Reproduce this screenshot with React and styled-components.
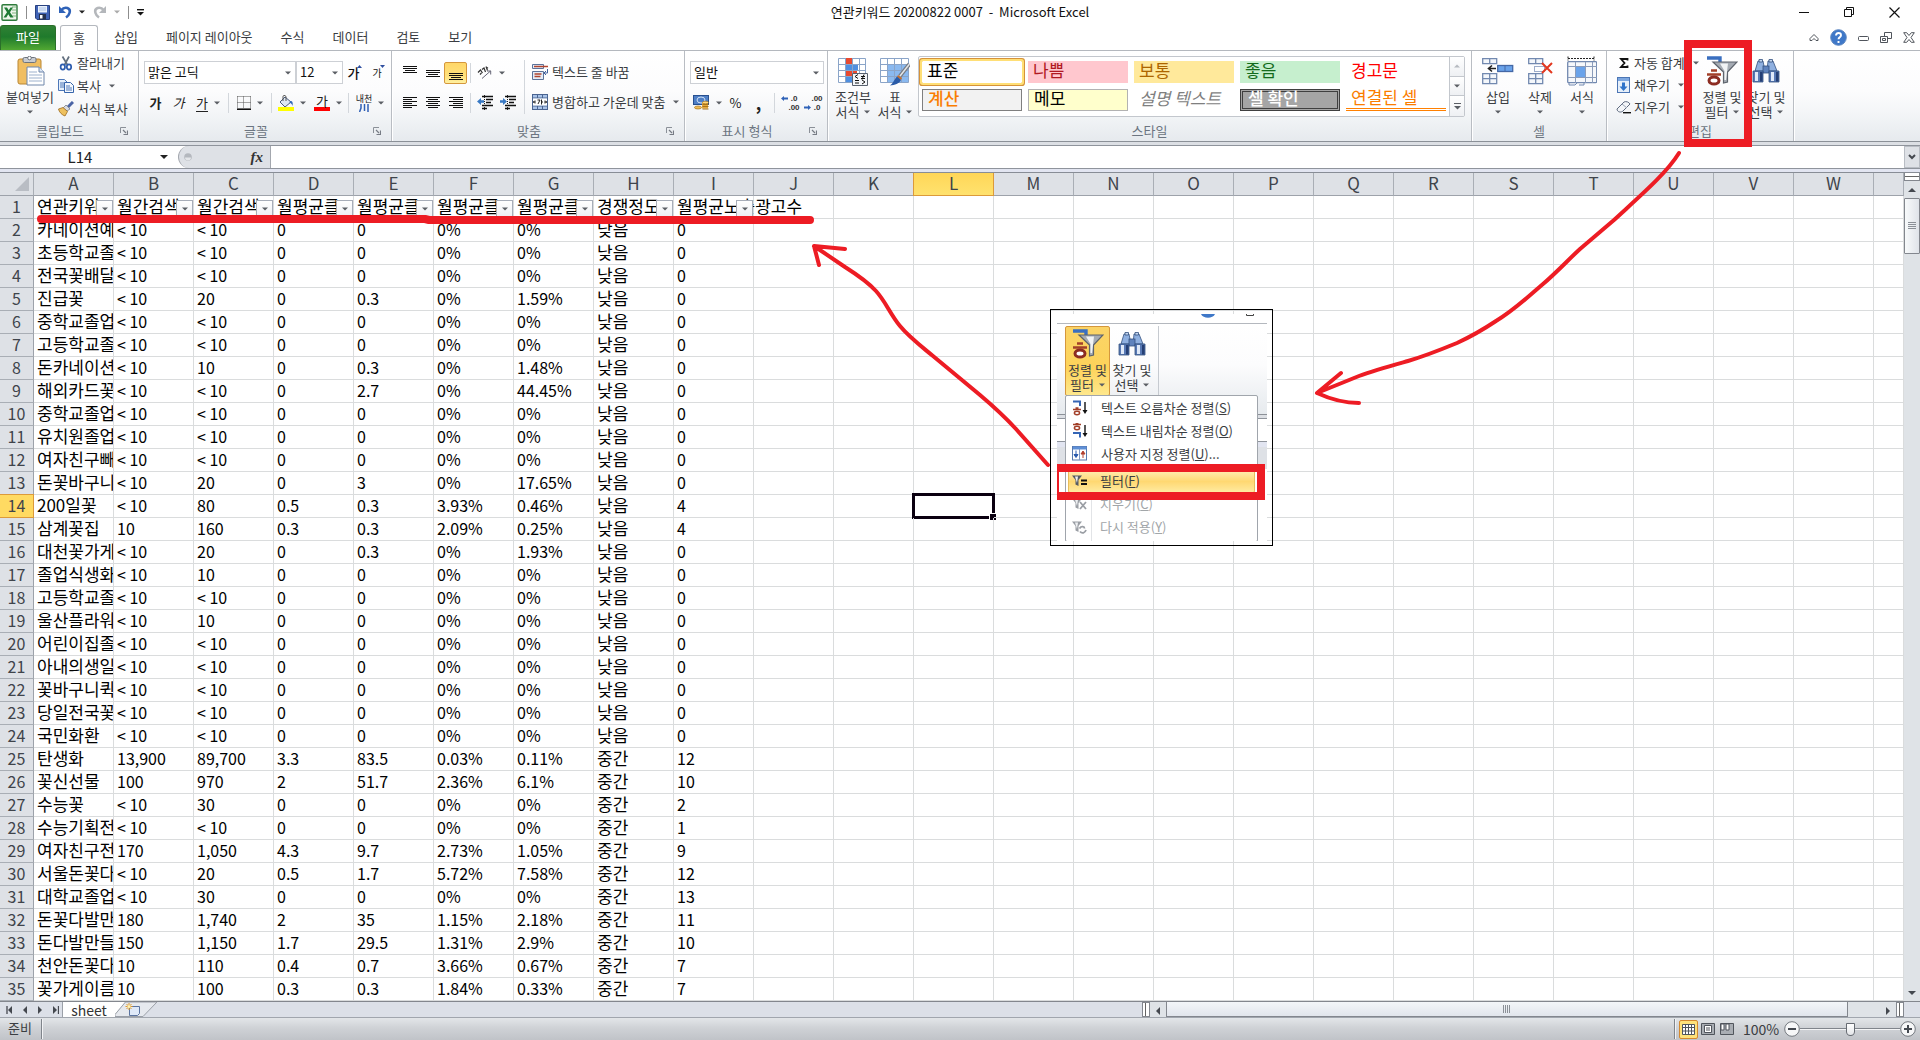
import React from "react";
import styled, { createGlobalStyle, css } from "styled-components";

const GlobalStyle = createGlobalStyle`
  * { box-sizing: border-box; }
  body { margin: 0; background: #fff; }
  button, input, select {
    font: inherit; color: inherit; margin: 0; padding: 0;
    border: 0; background: none; border-radius: 0; outline: none;
  }
  svg { display: block; flex: none; }
`;

/* ---------- frame ---------- */
const Window = styled.div`
  position: relative;
  display: flex;
  flex-direction: column;
  height: 100vh;
  overflow: hidden;
  background: #fff;
  color: #3a3d42;
  font-family: "Noto Sans CJK KR", "Noto Sans", sans-serif;
  font-size: 13px;
  line-height: 16px;
`;

const TitleBar = styled.header`
  display: grid;
  grid-template-columns: 1fr auto 1fr;
  align-items: center;
  height: 25px;
  padding-bottom: 1px;
`;
const QuickAccess = styled.div`
  display: flex;
  align-items: center;
  gap: 8px;
  padding-left: 1px;
`;
const QuickButton = styled.button`
  display: flex;
  align-items: center;
  gap: 7px;
  height: 20px;
`;
const ThinRule = styled.span`
  width: 1px;
  height: 13px;
  background: #8d8d8d;
`;
const Title = styled.h1`
  margin: 0;
  font-size: 13px;
  font-weight: 400;
  color: #111;
  white-space: pre;
`;
const Controls = styled.div`
  display: flex;
  justify-content: flex-end;
  align-items: center;
  gap: ${(p) => p.$gap}px;
  padding-right: ${(p) => p.$end}px;
`;
const PlainButton = styled.button`
  display: flex;
  align-items: center;
  justify-content: center;
`;

/* ---------- ribbon tabs ---------- */
const TabRow = styled.nav`
  display: flex;
  align-items: stretch;
  height: 26px;
  border-bottom: 1px solid #b4b8be;
`;
const FileTab = styled.button`
  width: 56px;
  margin-right: 4px;
  padding-bottom: 2px;
  color: #fff;
  border: 1px solid #2a6f2a;
  border-bottom: 0;
  border-radius: 3px 3px 0 0;
  background: linear-gradient(#2f8134, #1f7a2c 45%, #51a832);
`;
const RibbonTab = styled.button`
  padding: 0 14px 2px;
  ${(p) =>
    p.$active &&
    css`
      width: 38px;
      padding: 0 0 2px;
      margin: 0 2px -1px 0;
      background: #fff;
      border: 1px solid #b4b8be;
      border-bottom: 0;
      border-radius: 3px 3px 0 0;
    `}
`;

/* ---------- ribbon ---------- */
const Ribbon = styled.section`
  display: flex;
  height: 91px;
  background: linear-gradient(#fff, #fcfcfd 45%, #f3f5f7 70%, #e6eaee);
  border-bottom: 1px solid #8b9097;
`;
const Group = styled.div`
  display: flex;
  flex-direction: column;
  width: ${(p) => p.$w}px;
  border-right: 1px solid #b9bdc3;
  box-shadow: 1px 0 0 #fff;
`;
const GroupBody = styled.div`
  display: flex;
  height: 70px;
  padding-left: ${(p) => p.$pad}px;
`;
const GroupFoot = styled.div`
  display: flex;
  align-items: center;
  height: 19px;
  color: #6c7581;
`;
const GroupName = styled.span`
  flex: 1;
  text-align: center;
`;
const Launcher = styled.button`
  width: 18px;
  display: flex;
`;
const Stack = styled.div`
  display: flex;
  flex-direction: column;
  gap: ${(p) => p.$gap || 0}px;
  padding-top: ${(p) => p.$top}px;
  width: ${(p) => (p.$w ? p.$w + "px" : "auto")};
`;
const Row = styled.div`
  display: flex;
  align-items: center;
  height: 23px;
`;
const Tool = styled.button`
  display: flex;
  align-items: center;
  justify-content: center;
  gap: 6px;
  width: ${(p) => p.$w || 23}px;
  height: 22px;
  ${(p) =>
    p.$on &&
    css`
      border: 1px solid #d5973c;
      border-radius: 2px;
      background: linear-gradient(#ffd768, #ffe07a 60%, #fff0a0);
    `}
`;
const LineTool = styled.button`
  display: flex;
  align-items: center;
  gap: 3px;
  height: 22px;
  padding-left: 3px;
  white-space: nowrap;
  svg:last-child:not(:first-child) { margin-left: 5px; }
`;
const Divider = styled.span`
  align-self: ${(p) => (p.$tall ? "flex-start" : "center")};
  width: 1px;
  height: ${(p) => (p.$tall ? 54 : 20)}px;
  margin: ${(p) => (p.$tall ? 9 : 0)}px ${(p) => p.$m || 2}px 0;
  background: #d3d7dc;
`;
const BigTool = styled.button`
  display: flex;
  flex-direction: column;
  align-items: center;
  width: ${(p) => p.$w || 42}px;
  height: 70px;
  padding-top: ${(p) => (p.$snug ? 3 : 5)}px;
  line-height: 15px;
  white-space: nowrap;
  ${(p) =>
    p.$on &&
    css`
      padding-top: 2px;
      border: 1px solid #d5973c;
      border-radius: 2px;
      background: linear-gradient(#fbd467, #fdd35a 60%, #ffe88c);
    `}
`;
const BigLabel = styled.span`
  display: flex;
  align-items: center;
  justify-content: center;
  gap: 5px;
  height: 15px;
  &:first-of-type { margin-top: 3px; }
`;
const SelectBox = styled.label`
  position: relative;
  display: block;
  width: ${(p) => p.$w}px;
  height: 23px;
  svg { position: absolute; right: 5px; top: 10px; pointer-events: none; }
`;
const Select = styled.select`
  appearance: none;
  width: 100%;
  height: 23px;
  padding: 0 0 2px 3px;
  color: #111;
  background: #fff;
  border: 1px solid #cdd0d5;
`;
const GlyphText = styled.span`
  font-size: ${(p) => p.$size || 13}px;
  font-weight: ${(p) => (p.$bold ? 700 : 400)};
  font-style: ${(p) => (p.$slant ? "italic" : "normal")};
  color: #222;
  text-decoration: ${(p) => (p.$under ? "underline" : "none")};
  text-underline-offset: 3px;
`;
const SizeGlyph = styled.span`
  display: flex;
  align-items: flex-start;
  font-size: ${(p) => p.$size}px;
  font-weight: ${(p) => (p.$bold ? 500 : 400)};
  color: #111;
  svg { margin-left: -2px; }
`;
const RubyGlyph = styled.span`
  display: flex;
  flex-direction: column;
  align-items: center;
  font-size: 9px;
  line-height: 9px;
  color: #222;
  svg { margin-top: 1px; }
`;
const ColorGlyph = styled.span`
  display: flex;
  flex-direction: column;
  align-items: center;
  width: 16px;
  height: 16px;
  line-height: 12px;
  color: #222;
  border-bottom: 4px solid #f00;
`;

/* ---------- style gallery ---------- */
const Gallery = styled.div`
  display: flex;
  height: 61px;
  margin: 5px 0 0 2px;
  border: 1px solid #c3c7cd;
  border-radius: 2px;
  background: #fff;
`;
const Swatches = styled.div`
  display: grid;
  grid-template-columns: repeat(5, 100px);
  grid-auto-rows: 22px;
  gap: 6px;
  padding: 4px 3px;
`;
const swatchLooks = {
  normal: css`color: #000; border-radius: 1px; box-shadow: 0 0 0 2px #ffdf76, 0 0 0 3px #d5923a;`,
  bad: css`color: #b01822; background: #ffc7ce;`,
  neutral: css`color: #ad6500; background: #ffe99b;`,
  good: css`color: #146b1c; background: #c6efce;`,
  warn: css`color: #f00;`,
  calc: css`color: #fa7d00; font-weight: 500; background: #f2f2f2; border: 1px solid #7f7f7f;`,
  memo: css`color: #000; background: #ffffcc; border: 1px solid #b2b2b2;`,
  note: css`color: #7f7f7f; font-style: italic;`,
  check: css`color: #fff; font-weight: 500; background: #a5a5a5; border: 3px double #3f3f3f;`,
  linked: css`color: #fa7d00; border-bottom: 3px double #ff8001;`,
};
const Swatch = styled.button`
  display: flex;
  align-items: center;
  padding: 0 0 4px 5px;
  font-size: 17px;
  line-height: 18px;
  white-space: nowrap;
  ${(p) => swatchLooks[p.$look]}
`;
const GalleryScroll = styled.div`
  display: grid;
  grid-template-rows: repeat(3, 1fr);
  width: 15px;
`;
const GalleryButton = styled.button`
  display: flex;
  align-items: center;
  justify-content: center;
  border-left: 1px solid #c3c7cd;
  border-bottom: 1px solid #c3c7cd;
  background: linear-gradient(#fff, #eef0f3);
  &:last-child { border-bottom: 0; }
`;

/* ---------- formula bar ---------- */
const FormulaBar = styled.div`
  display: flex;
  height: 27px;
  padding-top: 3px;
  background: #dcdfe4;
`;
const FormulaInner = styled.div`
  display: flex;
  flex: 1;
  background: #fff;
  border-top: 1px solid #8f949c;
  border-bottom: 1px solid #8f949c;
`;
const NameBox = styled.div`
  display: flex;
  align-items: center;
  width: 178px;
  background: #fff;
`;
const NameInput = styled.input`
  width: 160px;
  text-align: center;
  font-size: 15px;
  line-height: 20px;
  color: #222;
`;
const FxArea = styled.div`
  display: flex;
  align-items: center;
  justify-content: space-between;
  width: 93px;
  padding: 0 7px 0 5px;
  background: #dee1e6;
  border: 1px solid #a3a7ae;
  border-width: 0 1px 0 1px;
  border-radius: 11px 0 0 11px;
`;
const FxName = styled.button`
  font-family: "Liberation Serif", serif;
  font-style: italic;
  font-weight: 700;
  font-size: 15px;
  color: #333;
`;
const FormulaInput = styled.input`
  flex: 1;
  background: #fff;
`;
const Expander = styled.button`
  display: flex;
  align-items: center;
  justify-content: center;
  width: 16px;
  background: #dee1e6;
  border: 1px solid #b9bdc4;
`;
const Strip = styled.div`
  height: 4px;
  background: #e2e5f1;
  border-bottom: 1px solid #888d96;
`;

/* ---------- sheet ---------- */
const SheetArea = styled.main`
  display: flex;
  flex: 1;
  min-height: 0;
`;
const SheetClip = styled.div`
  flex: 1;
  overflow: hidden;
`;
const Sheet = styled.table`
  width: 100%;
  table-layout: fixed;
  border-collapse: separate;
  border-spacing: 0;
`;
const Col = styled.col`width: ${(p) => (p.$w ? p.$w + "px" : "auto")};`;
const ColHead = styled.th`
  height: 23px;
  padding: 0 0 2px;
  font-size: 17px;
  line-height: 20px;
  font-weight: 400;
  color: #3f444b;
  background: #dee1e6;
  border-right: 1px solid #a9aeb5;
  border-bottom: 1px solid #9da2aa;
  ${(p) =>
    p.$on &&
    css`
      background: linear-gradient(#ffd658, #ffe26e);
      border-color: #dc9a3a;
      box-shadow: -1px 0 0 #dc9a3a;
    `}
`;
const Corner = styled(ColHead)`
  svg { margin: 2px 4px 0 auto; }
`;
const RowHead = styled.th`
  height: 23px;
  padding: 0 0 2px;
  font-size: 16px;
  line-height: 20px;
  font-weight: 400;
  color: #3f444b;
  background: #dee1e6;
  border-right: 1px solid #9da2aa;
  border-bottom: 1px solid #a9aeb5;
  ${(p) =>
    p.$on &&
    css`
      background: #ffda62;
      border-color: #dc9a3a;
      box-shadow: 0 -1px 0 #dc9a3a;
    `}
`;
const Cell = styled.td`
  position: relative;
  height: 23px;
  padding: 0 0 2px 3px;
  color: #000;
  font-size: ${(p) => (p.$hangul ? 17 : 16)}px;
  line-height: 20px;
  white-space: nowrap;
  overflow: ${(p) => (p.$clip ? "hidden" : "visible")};
  border-right: 1px solid #dadcdd;
  border-bottom: 1px solid #dadcdd;
`;
const FilterButton = styled.button`
  position: absolute;
  right: 0;
  bottom: 0;
  display: flex;
  align-items: center;
  justify-content: center;
  width: 17px;
  height: 18px;
  background: linear-gradient(#fff, #eceef2);
  border: 1px solid #a7adb8;
`;
const Cursor = styled.span`
  position: absolute;
  inset: -2px;
  border: 3px solid #0a0010;
  &::after {
    content: "";
    position: absolute;
    right: -4px;
    bottom: -4px;
    width: 6px;
    height: 6px;
    background: #0a0010;
    border: 1px solid #fff;
    border-width: 1px 0 0 1px;
  }
`;

/* ---------- scroll bars ---------- */
const VScroll = styled.div`
  display: flex;
  flex-direction: column;
  width: 16px;
  background: #dfe3e7;
`;
const SplitHandle = styled.div`
  height: 8px;
  border: 1px solid #83878e;
  border-top: 0;
  background: linear-gradient(#fff 3px, #666 3px, #666 4px, #fff 4px);
`;
const ArrowButton = styled.button`
  display: flex;
  align-items: center;
  justify-content: center;
  width: 16px;
  height: 17px;
`;
const VThumb = styled.div`
  display: flex;
  align-items: center;
  justify-content: center;
  height: 56px;
  border: 1px solid #83878e;
  border-radius: 1px;
  background: linear-gradient(90deg, #f8fafb, #dfe3e9);
`;
const Filler = styled.div`flex: 1;`;

const SheetBar = styled.div`
  display: flex;
  height: 17px;
  background: #dce0e8;
  border-top: 1px solid #83878e;
  border-bottom: 1px solid #a1a6ae;
`;
const SheetNav = styled.div`
  display: flex;
  align-items: center;
  width: 63px;
  padding-left: 2px;
  border-right: 1px solid #9ba0a8;
`;
const NavButton = styled.button`
  display: flex;
  justify-content: center;
  width: 15px;
`;
const SheetTab = styled.button`
  width: 52px;
  line-height: 14px;
  font-size: 14px;
  color: #333;
  background: #fff;
`;
const HSplit = styled.div`
  width: 8px;
  border: 1px solid #83878e;
  background: linear-gradient(90deg, #fff 2px, #666 2px, #666 3px, #fff 3px);
`;
const HTrack = styled.div`
  display: flex;
  width: 746px;
  background: #dfe3e7;
`;
const HThumb = styled.div`
  display: flex;
  align-items: center;
  justify-content: center;
  flex: 1;
  margin-right: 32px;
  border: 1px solid #83878e;
  border-top: 0;
  background: linear-gradient(#f3f6f9, #e1e5ec);
`;

/* ---------- status bar ---------- */
const StatusBar = styled.footer`
  display: flex;
  align-items: center;
  height: 22px;
  background: linear-gradient(#e3e6e9, #cfd2d6 45%, #c0c3c8);
`;
const StatusText = styled.span`
  padding: 0 9px 2px 8px;
`;
const StatusRule = styled.span`
  width: 1px;
  height: 20px;
  background: #7f848b;
  box-shadow: 1px 0 0 #f2f3f5;
`;
const ViewButton = styled.button`
  display: flex;
  align-items: center;
  justify-content: center;
  width: 19px;
  height: 19px;
  ${(p) =>
    p.$on &&
    css`
      border: 1px solid #d5892e;
      border-radius: 2px;
      background: #ffe27a;
    `}
`;
const Views = styled.div`
  display: flex;
  padding: 0 7px 0 4px;
`;
const ZoomValue = styled.button`
  width: 36px;
  font-size: 14px;
`;
const ZoomSlider = styled.input`
  appearance: none;
  width: 100px;
  height: 18px;
  background: linear-gradient(transparent 8px, #80858c 8px, #80858c 9px, #f4f5f6 9px, #f4f5f6 10px, transparent 10px);
  &::-webkit-slider-thumb {
    appearance: none;
    width: 9px;
    height: 13px;
    background: linear-gradient(#fff, #e4e6e9);
    border: 1px solid #666b72;
    border-radius: 1px 1px 5px 5px;
  }
`;
const ZoomEnds = styled.div`
  display: flex;
  align-items: center;
  padding: 0 4px 0 5px;
`;

/* ---------- pasted capture with the open menu ---------- */
const Capture = styled.aside`
  position: absolute;
  left: 1050px;
  top: 309px;
  width: 223px;
  height: 237px;
  padding: 4px 5px 4px 6px;
  border: 1px solid #000;
`;
const Shot = styled.div`
  position: relative;
  height: 227px;
  overflow: hidden;
  background: #fff;
`;
const ShotTop = styled.div`
  display: flex;
  justify-content: flex-end;
  gap: 31px;
  height: 10px;
  padding-right: 13px;
  border-bottom: 1px solid #b4b8be;
`;
const ShotRibbon = styled.div`
  display: flex;
  height: 91px;
  padding: 2px 0 0 8px;
  border-bottom: 1px solid #8b9097;
  background: linear-gradient(#fff, #fcfcfd 45%, #e6eaee);
`;
const ShotRule = styled.div`
  height: 74px;
  width: 1px;
  margin-left: 4px;
  background: #c6cad0;
`;
const ShotBars = styled.div`
  height: 32px;
  background: linear-gradient(#dcdfe4 3px, #8f949c 3px, #8f949c 4px, #fff 4px, #fff 26px, #8f949c 26px, #8f949c 27px, #e2e5f1 27px);
`;
const ShotHeads = styled.div`
  height: 22px;
  background: #dee1e6;
`;
const Menu = styled.ul`
  position: absolute;
  left: 8px;
  top: 81px;
  width: 193px;
  margin: 0;
  padding: 1px 2px 2px;
  list-style: none;
  background: linear-gradient(90deg, #fff 25px, #e2e4e7 25px, #e2e4e7 26px, #fff 26px);
  border: 1px solid #a0a5ac;
  border-radius: 2px;
`;
const MenuItem = styled.li`
  border-top: ${(p) => (p.$sep ? 4 : 0)}px solid transparent;
`;
const MenuButton = styled.button`
  display: flex;
  align-items: center;
  gap: 13px;
  width: 100%;
  height: 23px;
  padding: 0 0 2px 4px;
  white-space: nowrap;
  color: ${(p) => (p.disabled ? "#a2a6a9" : "#3a3d42")};
  ${(p) =>
    p.$on &&
    css`
      border: 1px solid #e8bd5a;
      border-radius: 2px;
      padding-left: 3px;
      background: linear-gradient(#ffecb0, #ffd872 50%, #ffeaa0);
    `}
`;
const Marks = styled.svg`
  position: absolute;
  left: 0;
  top: 0;
  pointer-events: none;
`;

/* ---------- icons ---------- */
const Down = ({ c = "#5a5e64" }) => (
  <svg width="6" height="4" viewBox="0 0 6 4"><path d="M0 .5h6L3 3.5z" fill={c} /></svg>
);
const ExcelIcon = () => (
  <svg width="17" height="17" viewBox="0 0 17 17">
    <rect x="1" y=".8" width="15" height="15.4" rx="1" fill="#eef6ec" stroke="#2d7a3a" strokeWidth="1.4" />
    <path d="M11 3h4M11 6h4M11 9h4M11 12h4" stroke="#7fb57f" />
    <path d="M3 3.5h3l1.700 2.800L9.500 3.500H12L9 8.300 12.500 13.500H9.300L7.300 10.300 5.300 13.500H2.500L6 8.300z" fill="#1f7a35" />
  </svg>
);
const SaveIcon = () => (
  <svg width="15" height="15" viewBox="0 0 15 15">
    <path d="M.5.5h14v14H2L.500 13z" fill="#3f62b5" stroke="#28417f" />
    <rect x="3" y="1" width="9" height="6.500" fill="#e8f0fb" />
    <path d="M4 3h7M4 5h7" stroke="#a9c0e5" />
    <rect x="4" y="9" width="7" height="5.500" fill="#26324f" /><rect x="5" y="10" width="2.500" height="3.500" fill="#fff" />
  </svg>
);
const Undo = ({ c = "#2f62b8", flip }) => (
  <svg width="14" height="14" viewBox="0 0 14 14">
    <g transform={flip ? "translate(14 0) scale(-1 1)" : undefined}>
      <path d="M3 5.500C7 .5 13 3 11.500 8c-.5 2-2 3.500-3.500 4.500" fill="none" stroke={c} strokeWidth="2.600" />
      <path d="M1 1v7h7z" fill={c} />
    </g>
  </svg>
);
const PasteIcon = () => (
  <svg width="30" height="30" viewBox="0 0 30 30">
    <rect x="3" y="3" width="23" height="25" rx="2" fill="#f0be62" stroke="#b98632" />
    <rect x="8" y="1.500" width="13" height="5" rx="1.500" fill="#c7cbd1" stroke="#6e747c" /><circle cx="14.500" cy="2" r="1.800" fill="#fff" stroke="#6e747c" />
    <path d="M12 11h12l5 5v13H12z" fill="#fff" stroke="#6e86aa" /><path d="M24 11v5h5" fill="#dbe6f5" stroke="#6e86aa" />
    <path d="M14 16h8M14 19h13M14 22h13M14 25h13" stroke="#9db1cd" />
  </svg>
);
const ScissorsIcon = () => (
  <svg width="16" height="16" viewBox="0 0 16 16">
    <path d="M4.500 1.500 9.500 10M11 1.500 6.500 10" stroke="#63707f" strokeWidth="1.700" />
    <ellipse cx="4.800" cy="12" rx="2.200" ry="2.600" fill="none" stroke="#2c5cae" strokeWidth="1.700" />
    <ellipse cx="11" cy="12" rx="2.200" ry="2.600" fill="none" stroke="#2c5cae" strokeWidth="1.700" />
  </svg>
);
const CopyIcon = () => (
  <svg width="16" height="16" viewBox="0 0 16 16">
    <path d="M.5 1.500h6l3 3v8h-9z" fill="#e7f0fb" stroke="#4d77b8" /><path d="M2 5h4M2 7h5M2 9h5" stroke="#4d77b8" />
    <path d="M6.500 4.500h6l3 3v7h-9z" fill="#f4f8fe" stroke="#3765ab" /><path d="M8 8h4M8 10h6M8 12h6" stroke="#4d77b8" />
  </svg>
);
const BrushIcon = () => (
  <svg width="16" height="16" viewBox="0 0 16 16">
    <path d="M15 1 10 6" stroke="#4a64a5" strokeWidth="3" />
    <path d="m8 4 4 4-3 2-4-3z" fill="#d7dae0" stroke="#6b7078" strokeWidth=".7" />
    <path d="M5 6.500 9.500 10.500 7 15C4 14 1 11 .5 8z" fill="#eec15f" stroke="#9c6b1e" strokeWidth=".8" />
  </svg>
);
const Lines = ({ rows }) => (
  <svg width="15" height="14" viewBox="0 0 15 14">
    {rows.map(([y, a, b]) => <path key={y} d={`M${a} ${y + 0.5}H${b}`} stroke="#111" />)}
  </svg>
);
const ALIGN = {
  top: [[0, 1, 15], [2, 1, 15], [4, 3, 13], [6, 1, 15]],
  middle: [[4, 1, 15], [6, 1, 15], [8, 3, 13], [10, 1, 15]],
  bottom: [[7, 1, 15], [9, 1, 15], [11, 3, 13], [13, 1, 15]],
  left: [[1, 1, 15], [3, 1, 10], [5, 1, 15], [7, 1, 10], [9, 1, 15], [11, 1, 10]],
  center: [[1, 1, 15], [3, 3, 13], [5, 1, 15], [7, 3, 13], [9, 1, 15], [11, 3, 13]],
  right: [[1, 1, 15], [3, 5, 15], [5, 1, 15], [7, 5, 15], [9, 1, 15], [11, 5, 15]],
};
const IndentIcon = ({ out }) => (
  <svg width="17" height="15" viewBox="0 0 17 15">
    <path d="M5 1.500h11M9 4.500h7M9 7.500h5M5 10.500h11M5 13.500h5" stroke="#111" strokeWidth="1.400" />
    <path d={out ? "M0 6.500 4 3v2.300h3v2.400H4V10z" : "M7 6.500 3 3v2.300H0v2.400h3V10z"} fill="#3879c4" />
    <path d="M7.500 0v15" stroke="#222" strokeDasharray="1 1" />
  </svg>
);
const OrientIcon = () => (
  <svg width="16" height="15" viewBox="0 0 16 15">
    <path d="M1 7.500 3.500 5l2 3M3 9.500l1.500-1.500M5 4.500 7 3l1.500 4M9 1.500l1.500 4M9.500 3.500 11 2.500" fill="none" stroke="#333" strokeWidth="1.200" />
    <path d="M5 13.500 13.500 6M10 6h3.700v3.500" fill="none" stroke="#667" />
  </svg>
);
const WrapIcon = () => (
  <svg width="17" height="16" viewBox="0 0 17 16">
    <path d="M.5.500h11v4H.500zM.500 7.500h11v8H.500z" fill="#e4ecf7" stroke="#5c7299" />
    <path d="M2 2.500h14" stroke="#b1452f" strokeWidth="1.500" /><path d="M2.500 10h7M2.500 12.500h6" stroke="#b1452f" strokeWidth="1.400" />
    <path d="M15.500 5v4h-3M14 7l-2 2 2 2" fill="none" stroke="#3f5f9d" />
  </svg>
);
const MergeIcon = () => (
  <svg width="17" height="16" viewBox="0 0 17 16">
    <rect x=".5" y=".5" width="15" height="15" fill="#a9c3e8" stroke="#4a6491" />
    <path d="M.5 4h15M.5 12h15M5.500.500V4M10.500.500V4M5.500 12v3.500M10.500 12v3.500" stroke="#4a6491" />
    <rect x="1" y="4.500" width="14" height="7" fill="#fff" />
    <path d="M1 8h3M12 8h3M3 6.500 1.500 8 3 9.500M13 6.500 14.500 8 13 9.500" stroke="#222" fill="none" />
    <path d="M5.500 6h2.500L6 10M9.500 5.500v5M9.500 8H11" stroke="#222" fill="none" />
  </svg>
);
const BorderIcon = () => (
  <svg width="14" height="14" viewBox="0 0 14 14">
    <path d="M.5.500h13M.500 6.500h13M.500.500v12M6.500.500v12M13.500.500v12" stroke="#555" strokeDasharray="1 1" /><path d="M0 13.200h14" stroke="#111" strokeWidth="1.600" />
  </svg>
);
const FillIcon = () => (
  <svg width="16" height="16" viewBox="0 0 16 16">
    <path d="m7 2 6 5-6 5-5-5z" fill="#dde7f4" stroke="#4a5c7c" /><path d="M5 6V1.500C5 0 8 0 8 2v4" fill="none" stroke="#555" />
    <path d="M12 6c3 0 3 2 2.500 5-1-3-2-3-3-3z" fill="#3169b7" /><rect y="12" width="16" height="4" fill="#ff0" />
  </svg>
);
const CoinIcon = () => (
  <svg width="17" height="17" viewBox="0 0 17 17">
    <rect x=".5" y="1.500" width="15" height="9" fill="#4f7fc6" stroke="#28508f" /><ellipse cx="8" cy="6" rx="4" ry="3" fill="none" stroke="#cfe0f5" />
    <path d="M9 8.500h6v6H9z" fill="#e6a93a" /><ellipse cx="12.500" cy="8.500" rx="3" ry="1.300" fill="#ffd97c" stroke="#a8731a" strokeWidth=".7" />
    <path d="M9.500 10.500h6M9.500 12.500h6M9.500 15h6" stroke="#a8731a" /><ellipse cx="5" cy="13.500" rx="3.500" ry="1.500" fill="#f0bc55" stroke="#a8731a" strokeWidth=".7" />
  </svg>
);
const DigitStack = styled.span`
  display: grid;
  grid-template-columns: auto auto;
  align-items: center;
  justify-content: end;
  font-family: "Liberation Sans", sans-serif;
  font-size: 8px;
  font-weight: 700;
  line-height: 9px;
  color: #333;
`;
const TinyArrow = ({ left }) => (
  <svg width="7" height="5" viewBox="0 0 7 5"><path d={left ? "M0 2.500 3 0v1.600h4v1.800H3V5z" : "M7 2.500 4 0v1.600H0v1.800h4V5z"} fill="#2f62b8" /></svg>
);
const CondIcon = () => (
  <svg width="30" height="30" viewBox="0 0 30 30">
    <path d="M.5 2.500h27v24H.500z" fill="#fff" stroke="#8aa4c8" />
    <path d="M8 2h6v6H8zM8 14h11v6H8z" fill="#e8492f" /><path d="M8 8h12v6H8zM8 20h6v6H8z" fill="#4f8fe0" />
    <path d="M7.500 2v24M14.500 2v24M21.500 2v24M.500 8.500h27M.500 14.500h27M.500 20.500h27" stroke="#8aa4c8" />
    <path d="M14.500 17.500h15v12h-15z" fill="#f5f7fa" stroke="#59616e" />
    <path d="m20 18.500-3 2 3 2M17 24.500h4M17 27h4M23 20.500h4M23 22.500h4M26 18.500l-2 5M24 24l3 2-3 2" fill="none" stroke="#111" />
  </svg>
);
const TableIcon = () => (
  <svg width="30" height="30" viewBox="0 0 30 30">
    <path d="M.5 2.500h28v24H.500z" fill="#fff" stroke="#8aa4c8" /><path d="M8 8h20v18H8z" fill="#8ab9f0" />
    <path d="M7.500 2v24M14.500 2v24M21.500 2v24M.500 8.500h28M.500 14.500h28M.500 20.500h28" stroke="#8aa4c8" />
    <path d="M29.500 8 20 20" stroke="#777c84" strokeWidth="4" /><path d="M29.500 8 20 20" stroke="#e5e7ea" strokeWidth="1.500" />
    <path d="m18 19 4 3-1 2-4-3z" fill="#c86f2c" /><path d="M17 20.500 21 24c-2 4-6 5-11 5.500 3-2 4-6 7-9z" fill="#2a5ba8" />
  </svg>
);
const InsertIcon = () => (
  <svg width="32" height="30" viewBox="0 0 32 30">
    <path d="M.7 2.700h14v5H.700zM.700 17.700h14v10H.700zM7.700 2.700v5M7.700 17.700v10M.700 22.700h14" fill="#f4f7fb" stroke="#7289b0" strokeWidth="1.300" />
    <rect x="15.700" y="9.500" width="15" height="6" fill="#6aa3ea" stroke="#4468a6" strokeWidth="1.300" />
    <path d="M23 9v7" stroke="#4468a6" /><path d="M7 12.500h7M10 9.500l-3.500 3 3.500 3" fill="none" stroke="#222" strokeWidth="1.600" />
  </svg>
);
const DeleteIcon = () => (
  <svg width="30" height="30" viewBox="0 0 30 30">
    <path d="M3.700 2.700h14v5h-14zM3.700 17.700h14v10h-14zM10.700 2.700v5M10.700 17.700v10M3.700 22.700h14" fill="#f4f7fb" stroke="#7289b0" strokeWidth="1.300" />
    <path d="M9.500 10.500h10v5h-10z" fill="none" stroke="#3b5b95" strokeDasharray="1 1" />
    <path d="m17 7 10 10M27 7 17 17" stroke="#e2371f" strokeWidth="2" />
  </svg>
);
const FormatIcon = () => (
  <svg width="30" height="30" viewBox="0 0 30 30">
    <path d="M1 .500v4M27 .500v4M1 2.500h26" stroke="#222" strokeDasharray="2 1" />
    <rect x=".7" y="5.700" width="29" height="21" rx="1" fill="#f6f8fb" stroke="#7289b0" strokeWidth="1.300" />
    <path d="M9 10h9v11H9z" fill="#6aa3ea" /><path d="M8.500 6v21M18.500 6v21M25.500 6v21M1 10.500h29M1 21.500h29" stroke="#8b9cba" />
    <path d="M2 27v2h6l2-2M12 29h5v-2" fill="none" stroke="#7289b0" />
  </svg>
);
const SigmaIcon = () => (
  <svg width="15" height="14" viewBox="0 0 15 14"><path d="M11.500 4.500V3H5l3.500 4L5 11h6.500V9.500" fill="none" stroke="#111" strokeWidth="1.800" /></svg>
);
const FillDownIcon = () => (
  <svg width="15" height="16" viewBox="0 0 15 16">
    <rect x="1.500" y=".5" width="12" height="15" fill="#e6effa" stroke="#4c76b5" /><rect x="2" y="1" width="11" height="3" fill="#7da7e0" />
    <path d="M7.500 14 3.500 9.500H6V5.500h3v4h2.500z" fill="#2f73c9" />
  </svg>
);
const EraserIcon = () => (
  <svg width="15" height="14" viewBox="0 0 15 14">
    <path d="m1 9 7-7c2-1 5 0 6 2L7 11c-2 2-6 1-6-2z" fill="#f3f5f8" stroke="#5f6b80" /><path d="m6 4 5 4" stroke="#98a2b4" /><path d="M7 12.700h8" stroke="#111" strokeWidth="1.400" />
  </svg>
);
const SortFilterIcon = () => (
  <svg width="32" height="30" viewBox="0 0 32 30">
    <path d="M1 2h13v9" fill="none" stroke="#3a6fc0" strokeWidth="3.400" />
    <path d="M7 6h24l-9.500 10v10l-4 1V16z" fill="#a5abb3" stroke="#5d636c" strokeWidth="1.200" />
    <path d="M14 7.500h8L20 24h-1.500V15z" fill="#f1f3f5" />
    <path d="M1 18.500h14M5 14.500h6" stroke="#a3402a" strokeWidth="2.600" /><ellipse cx="8" cy="24.500" rx="5" ry="3.500" fill="#fff" stroke="#8c2c22" strokeWidth="3" />
  </svg>
);
const FindIcon = () => (
  <svg width="30" height="30" viewBox="0 0 30 30">
    <g stroke="#34507f" strokeWidth=".8">
      <path d="M7 5h5l2 10H4zM17 5h5l4 10H16z" fill="#8fb0e0" /><path d="M8 3.500h3.500V6H8zM18 3.500h3.500V6H18z" fill="#c3d5ef" />
      <rect x="12" y="10" width="6" height="7" fill="#5f83bd" />
      <path d="M2 15h10v11H2zM18 15h10v11H18z" fill="#5879b5" />
    </g>
    <path d="M4 16h3v9H4zM20 16h3v9h-3z" fill="#dfe9f8" /><path d="M9 16h2.500v9.500H9zM25 16h2.500v9.500H25z" fill="#253f74" />
  </svg>
);
const LauncherIcon = () => (
  <svg width="8" height="8" viewBox="0 0 8 8"><path d="M.5 6V.500H6" fill="none" stroke="#8b9098" /><path d="M3 3l3 3M7.500 3.500v4h-4" fill="none" stroke="#777c85" strokeWidth="1.200" /></svg>
);
const HelpIcon = () => (
  <svg width="17" height="17" viewBox="0 0 17 17">
    <circle cx="8.500" cy="8.500" r="7.800" fill="#3f78c8" stroke="#5c86c0" /><path d="M6 6.500c0-3.500 5-3.200 5-.3 0 2-2.500 2-2.500 4M8.500 12v2" fill="none" stroke="#fff" strokeWidth="1.900" />
  </svg>
);
const FunnelSmall = ({ c = "#555b64", tail }) => (
  <svg width="15" height="15" viewBox="0 0 15 15"><path d="M0 2.500h10L6.500 7v6l-3-1.500V7z" fill={c} /><path d="M3 3.500h3L5 10z" fill="#eef0f2" />{tail}</svg>
);
const SortSmall = ({ desc }) => (
  <svg width="16" height="16" viewBox="0 0 16 16">
    <g transform={desc ? "translate(0 8.500)" : undefined}><path d="M1 1.500h7v4.500" fill="none" stroke="#3565b5" strokeWidth="2" /></g>
    <g transform={desc ? "translate(0 -8)" : undefined}><path d="M1 9.500h8M3.500 8h3" stroke="#a3402a" strokeWidth="1.500" /><ellipse cx="5" cy="13" rx="2.600" ry="1.700" fill="none" stroke="#a3402a" strokeWidth="1.500" /></g>
    <path d="M13 2v9" stroke="#111" strokeWidth="1.400" /><path d="M10.500 10h5L13 14z" fill="#111" />
  </svg>
);
const CustomSort = () => (
  <svg width="16" height="15" viewBox="0 0 16 15">
    <rect x=".5" y=".5" width="14" height="13.500" fill="#fff" stroke="#5679ae" /><path d="M1 2h13.500" stroke="#5e8fd6" strokeWidth="3" /><path d="M7.500 3v11" stroke="#7f99c4" />
    <path d="M4 4.500v6M2 8.500l2 3 2-3z" stroke="#2c5cae" fill="#2c5cae" /><path d="M11 12V6M9 8l2-3 2 3z" stroke="#b2402e" fill="#b2402e" />
  </svg>
);
const ZoomKnob = ({ plus }) => (
  <svg width="16" height="16" viewBox="0 0 16 16"><circle cx="8" cy="8" r="7.300" fill="#f6f7f8" stroke="#74797f" /><path d={plus ? "M4 8h8M8 4v8" : "M4 8h8"} stroke="#444950" strokeWidth="2" /></svg>
);
const Triangle = ({ dir, bar, c = "#44484f" }) => {
  const d = { left: "M6 0v8L2 4z", right: "M2 0v8l4-4z", up: "M0 6h8L4 2z", down: "M0 2h8L4 6z" }[dir];
  return (
    <svg width="8" height="8" viewBox="0 0 8 8">
      <path d={d} fill={c} />
      {bar && <path d={dir === "left" ? "M1 0v8" : "M7.500 0v8"} stroke={c} strokeWidth="1.300" />}
    </svg>
  );
};

/* ---------- data ---------- */
const TABS = ["삽입", "페이지 레이아웃", "수식", "데이터", "검토", "보기"];
const COLUMNS = "ABCDEFGHIJKLMNOPQRSTUVW".split("");
const HEADINGS = ["연관키워", "월간검색", "월간검색", "월평균클", "월평균클", "월평균클", "월평균클", "경쟁정도", "월평균노출광고수"];
const L = "< 10";
const row = (name, b = L, c = L, d = "0", e = "0", f = "0%", g = "0%", h = "낮음", i = "0") => [name, b, c, d, e, f, g, h, i];
const RECORDS = [
  row("카네이션예"),
  row("초등학교졸"),
  row("전국꽃배달"),
  row("진급꽃", L, "20", "0", "0.3", "0%", "1.59%"),
  row("중학교졸업"),
  row("고등학교졸"),
  row("돈카네이션", L, "10", "0", "0.3", "0%", "1.48%"),
  row("해외카드꽃", L, L, "0", "2.7", "0%", "44.45%"),
  row("중학교졸업"),
  row("유치원졸업"),
  row("여자친구빼"),
  row("돈꽃바구니", L, "20", "0", "3", "0%", "17.65%"),
  row("200일꽃", L, "80", "0.5", "0.3", "3.93%", "0.46%", "낮음", "4"),
  row("삼계꽃집", "10", "160", "0.3", "0.3", "2.09%", "0.25%", "낮음", "4"),
  row("대천꽃가게", L, "20", "0", "0.3", "0%", "1.93%"),
  row("졸업식생화", L, "10"),
  row("고등학교졸"),
  row("울산플라워", L, "10"),
  row("어린이집졸"),
  row("아내의생일"),
  row("꽃바구니퀵"),
  row("당일전국꽃"),
  row("국민화환"),
  row("탄생화", "13,900", "89,700", "3.3", "83.5", "0.03%", "0.11%", "중간", "12"),
  row("꽃신선물", "100", "970", "2", "51.7", "2.36%", "6.1%", "중간", "10"),
  row("수능꽃", L, "30", "0", "0", "0%", "0%", "중간", "2"),
  row("수능기획전", L, L, "0", "0", "0%", "0%", "중간", "1"),
  row("여자친구전", "170", "1,050", "4.3", "9.7", "2.73%", "1.05%", "중간", "9"),
  row("서울돈꽃다", L, "20", "0.5", "1.7", "5.72%", "7.58%", "중간", "12"),
  row("대학교졸업", L, "30", "0", "0", "0%", "0%", "중간", "13"),
  row("돈꽃다발만", "180", "1,740", "2", "35", "1.15%", "2.18%", "중간", "11"),
  row("돈다발만들", "150", "1,150", "1.7", "29.5", "1.31%", "2.9%", "중간", "10"),
  row("천안돈꽃다", "10", "110", "0.4", "0.7", "3.66%", "0.67%", "중간", "7"),
  row("꽃가게이름", "10", "100", "0.3", "0.3", "1.84%", "0.33%", "중간", "7"),
];
const SWATCHES = [
  ["표준", "normal"], ["나쁨", "bad"], ["보통", "neutral"], ["좋음", "good"], ["경고문", "warn"],
  ["계산", "calc"], ["메모", "memo"], ["설명 텍스트", "note"], ["셀 확인", "check"], ["연결된 셀", "linked"],
];

const RibbonGroup = ({ name, w, pad, launcher, children }) => (
  <Group $w={w}>
    <GroupBody $pad={pad}>{children}</GroupBody>
    <GroupFoot>
      <GroupName>{name}</GroupName>
      {launcher && <Launcher aria-label={name}><LauncherIcon /></Launcher>}
    </GroupFoot>
  </Group>
);
const Big = ({ icon, lines, w, on, snug }) => (
  <BigTool $w={w} $on={on} $snug={snug}>
    {icon}
    <BigLabel>{lines[0]}</BigLabel>
    <BigLabel>{lines[1]}<Down /></BigLabel>
  </BigTool>
);
const Picker = ({ w, value, label }) => (
  <SelectBox $w={w}>
    <Select aria-label={label} defaultValue={value}><option>{value}</option></Select>
    <Down />
  </SelectBox>
);
const Item = ({ icon, text, k, after, ...rest }) => (
  <MenuButton {...rest}>{icon}<span>{text}(<u>{k}</u>){after}</span></MenuButton>
);

function RibbonPanel() {
  return (
    <Ribbon>
      <RibbonGroup name="클립보드" w={139} pad={5} launcher>
        <Big icon={<PasteIcon />} lines={["붙여넣기", ""]} w={50} />
        <Stack $top={1} $gap={1}>
          <LineTool><ScissorsIcon />잘라내기</LineTool>
          <LineTool><CopyIcon />복사<Down /></LineTool>
          <LineTool><BrushIcon />서식 복사</LineTool>
        </Stack>
      </RibbonGroup>
      <RibbonGroup name="글꼴" w={253} pad={5} launcher>
        <Stack $top={10} $gap={7}>
          <Row>
            <Picker w={152} value="맑은 고딕" label="글꼴" />
            <Picker w={47} value="12" label="글꼴 크기" />
            <Tool $w={24} aria-label="글꼴 크기 크게">
              <SizeGlyph $size={13} $bold>가<svg width="5" height="3" viewBox="0 0 5 3"><path d="M0 3h5L2.500 0z" fill="#2f4fa0" /></svg></SizeGlyph>
            </Tool>
            <Tool aria-label="글꼴 크기 작게">
              <SizeGlyph $size={10}>가<svg width="5" height="3" viewBox="0 0 5 3"><path d="M0 0h5L2.500 3z" fill="#2f4fa0" /></svg></SizeGlyph>
            </Tool>
          </Row>
          <Row>
            <Tool><GlyphText $bold>가</GlyphText></Tool>
            <Tool><GlyphText $slant>가</GlyphText></Tool>
            <Tool $w={36}><GlyphText $under>가</GlyphText><Down /></Tool>
            <Divider />
            <Tool $w={38} aria-label="테두리"><BorderIcon /><Down /></Tool>
            <Divider />
            <Tool $w={36} aria-label="채우기 색"><FillIcon /><Down /></Tool>
            <Tool $w={36}><ColorGlyph>가</ColorGlyph><Down /></Tool>
            <Divider />
            <Tool $w={38} aria-label="윗주">
              <RubyGlyph>
                내천
                <svg width="10" height="8" viewBox="0 0 10 8"><path d="M2 0v4L.5 8M5.500 0v7M9 0v8" fill="none" stroke="#2f5fb5" strokeWidth="1.500" /></svg>
              </RubyGlyph>
              <Down />
            </Tool>
          </Row>
        </Stack>
      </RibbonGroup>
      <RibbonGroup name="맞춤" w={293} pad={6} launcher>
        <Stack $top={10} $gap={7}>
          <Row>
            <Tool aria-label="위쪽 맞춤"><Lines rows={ALIGN.top} /></Tool>
            <Tool aria-label="가운데 맞춤"><Lines rows={ALIGN.middle} /></Tool>
            <Tool aria-label="아래쪽 맞춤" $on><Lines rows={ALIGN.bottom} /></Tool>
            <Divider $m={3} />
            <Tool $w={34} aria-label="방향"><OrientIcon /><Down /></Tool>
          </Row>
          <Row>
            <Tool aria-label="왼쪽"><Lines rows={ALIGN.left} /></Tool>
            <Tool aria-label="가운데"><Lines rows={ALIGN.center} /></Tool>
            <Tool aria-label="오른쪽"><Lines rows={ALIGN.right} /></Tool>
            <Divider $m={3} />
            <Tool aria-label="내어쓰기"><IndentIcon out /></Tool>
            <Tool aria-label="들여쓰기"><IndentIcon /></Tool>
          </Row>
        </Stack>
        <Divider $tall $m={4} />
        <Stack $top={10} $gap={8}>
          <LineTool><WrapIcon />텍스트 줄 바꿈</LineTool>
          <LineTool><MergeIcon />병합하고 가운데 맞춤<Down /></LineTool>
        </Stack>
      </RibbonGroup>
      <RibbonGroup name="표시 형식" w={143} pad={5} launcher>
        <Stack $top={10} $gap={7}>
          <Picker w={134} value="일반" label="표시 형식" />
          <Row>
            <Tool $w={34} aria-label="회계 표시 형식"><CoinIcon /><Down /></Tool>
            <Tool><GlyphText>%</GlyphText></Tool>
            <Tool><GlyphText $size={17} $bold>,</GlyphText></Tool>
            <Divider $m={4} />
            <Tool><DigitStack><TinyArrow left /><span>.0</span><i /><span>.00</span></DigitStack></Tool>
            <Tool><DigitStack><i /><span>.00</span><TinyArrow /><span>.0</span></DigitStack></Tool>
          </Row>
        </Stack>
      </RibbonGroup>
      <RibbonGroup name="스타일" w={644} pad={4}>
        <Big icon={<CondIcon />} lines={["조건부", "서식"]} />
        <Big icon={<TableIcon />} lines={["표", "서식"]} />
        <Gallery>
          <Swatches>
            {SWATCHES.map(([text, look]) => <Swatch key={text} $look={look}>{text}</Swatch>)}
          </Swatches>
          <GalleryScroll>
            <GalleryButton aria-label="위로" disabled><svg width="6" height="4" viewBox="0 0 6 4"><path d="M0 3.500h6L3 .500z" fill="#b6bac0" /></svg></GalleryButton>
            <GalleryButton aria-label="아래로"><Down /></GalleryButton>
            <GalleryButton aria-label="자세히"><svg width="7" height="7" viewBox="0 0 7 7"><path d="M0 .500h7" stroke="#5a5e64" /><path d="M0 3h7L3.500 6.500z" fill="#5a5e64" /></svg></GalleryButton>
          </GalleryScroll>
        </Gallery>
      </RibbonGroup>
      <RibbonGroup name="셀" w={135} pad={5}>
        <Big icon={<InsertIcon />} lines={["삽입", ""]} />
        <Big icon={<DeleteIcon />} lines={["삭제", ""]} />
        <Big icon={<FormatIcon />} lines={["서식", ""]} />
      </RibbonGroup>
      <RibbonGroup name="편집" w={187} pad={6}>
        <Stack $top={1} $w={86}>
          <LineTool><SigmaIcon />자동 합계<Down /></LineTool>
          <LineTool><FillDownIcon />채우기<Down /></LineTool>
          <LineTool><EraserIcon />지우기<Down /></LineTool>
        </Stack>
        <Big icon={<SortFilterIcon />} lines={["정렬 및", "필터"]} w={46} />
        <Big icon={<FindIcon />} lines={["찾기 및", "선택"]} w={42} />
      </RibbonGroup>
    </Ribbon>
  );
}

function SheetTable() {
  const blanks = COLUMNS.slice(9);
  return (
    <Sheet>
      <colgroup>
        <Col $w={34} />
        {COLUMNS.map((c) => <Col key={c} $w={80} />)}
        <Col />
      </colgroup>
      <thead>
        <tr>
          <Corner><svg width="14" height="14" viewBox="0 0 14 14"><path d="M14 0v14H0z" fill="#b9bdc4" /></svg></Corner>
          {COLUMNS.map((c) => <ColHead key={c} $on={c === "L"}>{c}</ColHead>)}
          <ColHead />
        </tr>
      </thead>
      <tbody>
        <tr>
          <RowHead>1</RowHead>
          {HEADINGS.map((h, i) => (
            <Cell key={i} $hangul>
              {h}
              <FilterButton aria-label="필터"><Down /></FilterButton>
            </Cell>
          ))}
          {blanks.map((c) => <Cell key={c} />)}
          <Cell />
        </tr>
        {RECORDS.map((rec, r) => (
          <tr key={r}>
            <RowHead $on={r === 12}>{r + 2}</RowHead>
            {rec.map((v, i) => <Cell key={i} $hangul={i === 0 || i === 7} $clip={i === 0}>{v}</Cell>)}
            {blanks.map((c) => <Cell key={c}>{r === 12 && c === "L" && <Cursor />}</Cell>)}
            <Cell />
          </tr>
        ))}
        <tr>
          <RowHead />
          {COLUMNS.map((c) => <Cell key={c} />)}
          <Cell />
        </tr>
      </tbody>
    </Sheet>
  );
}

function FilterCapture() {
  return (
    <Capture>
      <Shot>
        <ShotTop>
          <svg width="14" height="5" viewBox="0 0 14 5"><path d="M0 0h14C12 5 2 5 0 0z" fill="#3f78c8" /></svg>
          <svg width="8" height="3" viewBox="0 0 8 3"><path d="M.5 0v1.500h7V0" fill="none" stroke="#444" /></svg>
        </ShotTop>
        <ShotRibbon>
          <Big icon={<SortFilterIcon />} lines={["정렬 및", "필터"]} w={45} on />
          <Big icon={<FindIcon />} lines={["찾기 및", "선택"]} w={44} snug />
          <ShotRule />
        </ShotRibbon>
        <ShotBars />
        <ShotHeads />
        <Menu>
          <MenuItem><Item icon={<SortSmall />} text="텍스트 오름차순 정렬" k="S" /></MenuItem>
          <MenuItem><Item icon={<SortSmall desc />} text="텍스트 내림차순 정렬" k="O" /></MenuItem>
          <MenuItem><Item icon={<CustomSort />} text="사용자 지정 정렬" k="U" after="..." /></MenuItem>
          <MenuItem $sep><Item $on icon={<FunnelSmall tail={<path d="M9 7.500h6M9 11h6" stroke="#111" strokeWidth="2" />} />} text="필터" k="F" /></MenuItem>
          <MenuItem><Item disabled icon={<FunnelSmall c="#9a9ea4" tail={<path d="m8 6 6 7M14 6l-6 7" stroke="#9a9ea4" strokeWidth="1.800" />} />} text="지우기" k="C" /></MenuItem>
          <MenuItem><Item disabled icon={<FunnelSmall c="#9a9ea4" tail={<path d="M7.500 9.500c2-3 5-2 5 0M14 11c-1 3-4 4-6 1.500" fill="none" stroke="#9a9ea4" strokeWidth="1.800" />} />} text="다시 적용" k="Y" /></MenuItem>
        </Menu>
      </Shot>
    </Capture>
  );
}

export default function App() {
  return (
    <Window>
      <GlobalStyle />
      <TitleBar>
        <QuickAccess>
          <ExcelIcon />
          <ThinRule />
          <QuickButton aria-label="저장"><SaveIcon /></QuickButton>
          <QuickButton aria-label="실행 취소"><Undo /><Down c="#222" /></QuickButton>
          <QuickButton aria-label="다시 실행"><Undo c="#b4b7bb" flip /><Down c="#aaa" /></QuickButton>
          <ThinRule />
          <QuickButton aria-label="빠른 실행 도구 모음"><svg width="7" height="7" viewBox="0 0 7 7"><path d="M0 .700h7" stroke="#111" strokeWidth="1.400" /><path d="M0 3h7L3.500 6.500z" fill="#111" /></svg></QuickButton>
        </QuickAccess>
        <Title>{"연관키워드 20200822 0007  -  Microsoft Excel"}</Title>
        <Controls $gap={35} $end={20}>
          <PlainButton aria-label="최소화"><svg width="10" height="10" viewBox="0 0 10 10"><path d="M0 5.500h10" stroke="#111" /></svg></PlainButton>
          <PlainButton aria-label="이전 크기로"><svg width="10" height="10" viewBox="0 0 10 10"><path d="M.5 2.500h7v7h-7zM2.500 2V.500h7v7H8" fill="none" stroke="#111" /></svg></PlainButton>
          <PlainButton aria-label="닫기"><svg width="11" height="11" viewBox="0 0 11 11"><path d="m.5.500 10 10M10.500.500l-10 10" stroke="#111" strokeWidth="1.200" /></svg></PlainButton>
        </Controls>
      </TitleBar>
      <TabRow>
        <FileTab>파일</FileTab>
        <RibbonTab $active>홈</RibbonTab>
        {TABS.map((t) => <RibbonTab key={t}>{t}</RibbonTab>)}
        <Filler />
        <Controls $gap={11} $end={5}>
          <PlainButton aria-label="리본 최소화"><svg width="10" height="9" viewBox="0 0 10 9"><path d="M1 5.500 5 1.500l4 4v2H7L5 5.500 3 7.500H1z" fill="#fff" stroke="#50555c" /></svg></PlainButton>
          <PlainButton aria-label="도움말"><HelpIcon /></PlainButton>
          <PlainButton aria-label="창 최소화"><svg width="11" height="9" viewBox="0 0 11 9"><rect x=".5" y="3.500" width="10" height="4" rx="1" fill="#fff" stroke="#50555c" /></svg></PlainButton>
          <PlainButton aria-label="창 복원"><svg width="12" height="11" viewBox="0 0 12 11"><path d="M4.500.500h7v6h-7z" fill="#fff" stroke="#50555c" /><path d="M.5 4.500h7v6h-7zM2.500 6.500h3v2h-3z" fill="#fff" stroke="#50555c" /></svg></PlainButton>
          <PlainButton aria-label="창 닫기"><svg width="12" height="11" viewBox="0 0 12 11"><path d="M.7.700h3L6 3.500 8.300.700h3L8 5.500l3.300 4.800h-3L6 7.500l-2.300 2.800h-3L4 5.500z" fill="#fff" stroke="#50555c" /></svg></PlainButton>
        </Controls>
      </TabRow>
      <RibbonPanel />
      <FormulaBar>
        <FormulaInner>
          <NameBox>
            <NameInput aria-label="이름 상자" defaultValue="L14" />
            <PlainButton aria-label="이름 목록"><Triangle dir="down" c="#222" /></PlainButton>
          </NameBox>
          <FxArea>
            <svg width="8" height="8" viewBox="0 0 8 8"><circle cx="4" cy="4" r="3.800" fill="#b4b8be" /><path d="M1 4.500a3 3 0 0 0 6 0z" fill="#e4e6e9" /></svg>
            <FxName>fx</FxName>
          </FxArea>
          <FormulaInput aria-label="수식 입력줄" />
          <Expander aria-label="수식 입력줄 확장"><svg width="8" height="6" viewBox="0 0 8 6"><path d="m1 1 3 3 3-3" fill="none" stroke="#44484f" strokeWidth="2" /></svg></Expander>
        </FormulaInner>
      </FormulaBar>
      <Strip />
      <SheetArea>
        <SheetClip><SheetTable /></SheetClip>
        <VScroll>
          <SplitHandle />
          <ArrowButton aria-label="위로 스크롤"><Triangle dir="up" /></ArrowButton>
          <VThumb><svg width="8" height="8" viewBox="0 0 8 8"><path d="M0 .500h8M0 2.500h8M0 4.500h8M0 6.500h8" stroke="#8b9097" /></svg></VThumb>
          <Filler />
          <ArrowButton aria-label="아래로 스크롤"><Triangle dir="down" /></ArrowButton>
        </VScroll>
      </SheetArea>
      <SheetBar>
        <SheetNav>
          <NavButton aria-label="첫 시트"><Triangle dir="left" bar /></NavButton>
          <NavButton aria-label="이전 시트"><Triangle dir="left" /></NavButton>
          <NavButton aria-label="다음 시트"><Triangle dir="right" /></NavButton>
          <NavButton aria-label="마지막 시트"><Triangle dir="right" bar /></NavButton>
        </SheetNav>
        <SheetTab>sheet</SheetTab>
        <PlainButton aria-label="시트 삽입">
          <svg width="46" height="15" viewBox="0 0 46 15">
            <path d="M0 0h10L0 12z" fill="#fff" /><path d="M10.500 0 0 12.500V14.500h28L42 0z" fill="#e6e9ee" stroke="#9ba0a8" />
            <path d="M14.500 4.500h10v7l-2 2h-8z" fill="#dfe9f8" stroke="#5b74a0" /><path d="M14 1v7M10.500 4.500h7M11.500 2l5 5M16.500 2l-5 5" stroke="#e09a2c" /><circle cx="14" cy="4.500" r="1.500" fill="#fff3b0" />
          </svg>
        </PlainButton>
        <Filler />
        <HSplit />
        <HTrack>
          <ArrowButton aria-label="왼쪽으로 스크롤"><Triangle dir="left" /></ArrowButton>
          <HThumb><svg width="8" height="8" viewBox="0 0 8 8"><path d="M.500 0v8M2.500 0v8M4.500 0v8M6.500 0v8" stroke="#8b9097" /></svg></HThumb>
          <ArrowButton aria-label="오른쪽으로 스크롤"><Triangle dir="right" /></ArrowButton>
        </HTrack>
        <HSplit />
        <ArrowButton as="span" />
      </SheetBar>
      <StatusBar>
        <StatusText>준비</StatusText>
        <StatusRule />
        <Filler />
        <StatusRule />
        <Views>
          <ViewButton $on aria-label="기본"><svg width="13" height="11" viewBox="0 0 13 11"><path d="M.5.500h12v10H.500zM.500 3.500h12M.500 7h12M3.500.500v10M6.500.500v10M9.500.500v10" fill="#fff" stroke="#50555c" /></svg></ViewButton>
          <ViewButton aria-label="페이지 레이아웃"><svg width="14" height="12" viewBox="0 0 14 12"><path d="M.5.500h13v11H.500z" fill="#a9adb3" stroke="#50555c" /><path d="M3.500 2.500h7v7h-7z" fill="#fff" stroke="#50555c" /><path d="M5 5h4M5 7h4" stroke="#50555c" /></svg></ViewButton>
          <ViewButton aria-label="페이지 나누기"><svg width="14" height="12" viewBox="0 0 14 12"><path d="M.5.500h13v11H.500z" fill="#a9adb3" stroke="#50555c" /><path d="M1 1h3v6H1zM6 1h3v6H6z" fill="#fff" stroke="#50555c" /></svg></ViewButton>
        </Views>
        <ZoomValue>100%</ZoomValue>
        <ZoomEnds>
          <PlainButton aria-label="축소"><ZoomKnob /></PlainButton>
          <ZoomSlider type="range" aria-label="확대/축소" defaultValue={50} />
          <PlainButton aria-label="확대"><ZoomKnob plus /></PlainButton>
        </ZoomEnds>
      </StatusBar>
      <FilterCapture />
      <Marks width="1920" height="1040" viewBox="0 0 1920 1040">
        <g fill="none" stroke="#ed1c24" strokeLinecap="round" strokeLinejoin="round">
          <path d="M41 219H425L429 220H810" strokeWidth="8" />
          <rect x="1688" y="44" width="60" height="99" strokeWidth="8" strokeLinejoin="miter" />
          <path d="M1057 464h208v36h-208zM1059 472v20h198v-20z" fill="#ed1c24" fillRule="evenodd" stroke="none" />
          <path d="M1679 153C1666 174 1640 196 1614 220L1580 249C1568 260 1556 273 1543 284C1528 297 1513 311 1496 321C1484 329 1470 337 1457 343C1440 350 1425 356 1408 361C1390 366 1375 370 1359 376L1317 393M1341 373 1317 393C1330 399 1344 403 1359 403" strokeWidth="4" />
          <path d="M1048 465 1016 429C1005 417 993 406 980 395L933 356C921 346 909 337 900 326C890 314 886 302 876 291C867 281 856 274 845 267L814 246M845 249 814 246 819 265" strokeWidth="4" />
        </g>
      </Marks>
    </Window>
  );
}
